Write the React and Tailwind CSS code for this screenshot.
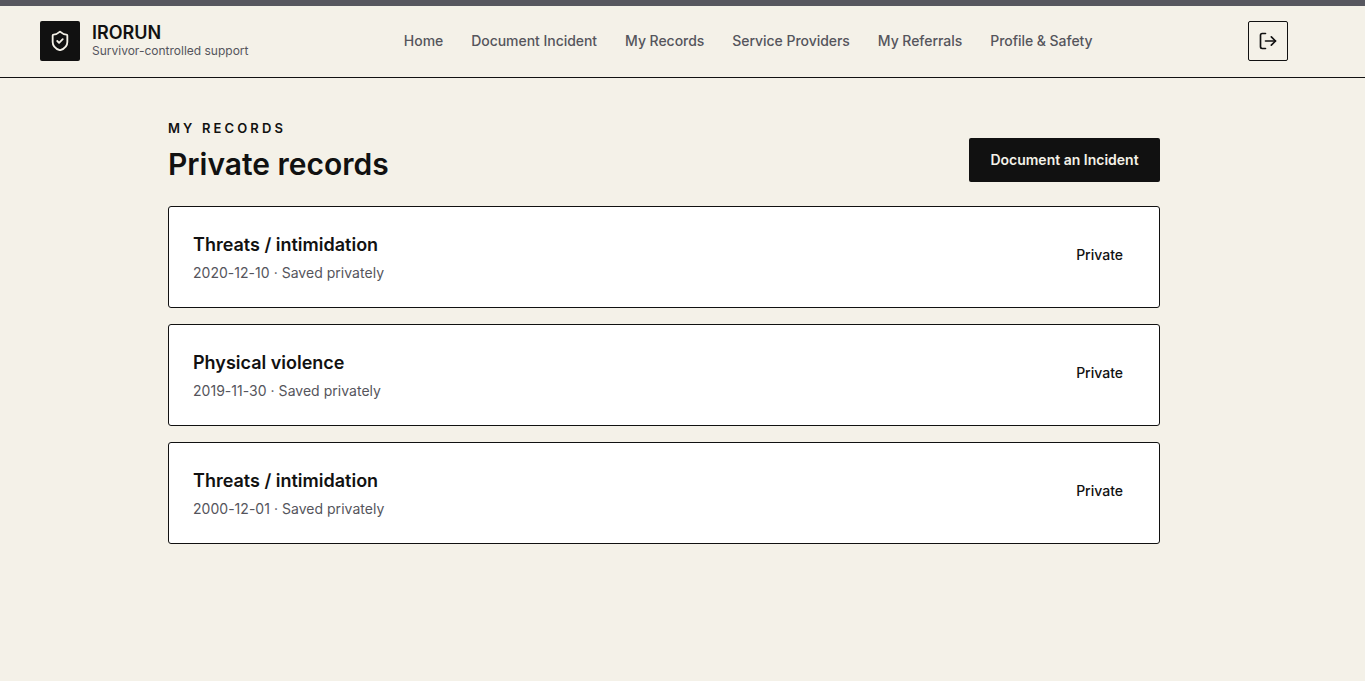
import { LogOut, ShieldCheck } from "lucide-react"

const links = ["Home", "Document Incident", "My Records", "Service Providers", "My Referrals", "Profile & Safety"]

const records = [
  { title: "Threats / intimidation", date: "2020-12-10" },
  { title: "Physical violence", date: "2019-11-30" },
  { title: "Threats / intimidation", date: "2000-12-01" },
]

function RecordCard({ title, date }) {
  return (
    <div className="h-[102px] bg-white border border-[#111111] rounded-[3px] pl-6 pr-9 flex items-center justify-between">
      <div>
        <h2 className="text-lg leading-7 font-semibold text-[#111111]">{title}</h2>
        <p className="text-sm leading-5 mt-1 tracking-[0.002em] text-[#55555c]">{date} · Saved privately</p>
      </div>
      <span className="text-sm leading-5 font-medium text-[#111111] mb-1">Private</span>
    </div>
  )
}

export default function App() {
  return (
    <div className="min-h-[681px] bg-[#f4f1e8] font-['Inter',sans-serif]">
      <div className="h-1.5 bg-[#57575f]" />

      {/* Header */}
      <header className="h-[72px] border-b border-[#111111] pb-px pl-10 pr-[77px] flex items-center justify-between">
        <div className="flex items-center gap-3">
          <div className="w-10 h-10 rounded-[2px] bg-[#111111] flex items-center justify-center">
            <ShieldCheck className="w-[22px] h-[22px] text-[#f4f1e8]" />
          </div>
          <div>
            <div className="text-lg leading-5 font-semibold text-[#111111]">IRORUN</div>
            <div className="text-xs leading-4 text-[#55555c]">Survivor-controlled support</div>
          </div>
        </div>
        <nav className="flex items-center gap-7">
          {links.map(link => (
            <a key={link} className="text-sm font-medium tracking-[-0.003em] text-[#55555c]">{link}</a>
          ))}
        </nav>
        <button className="w-10 h-10 border border-[#111111] rounded-[2px] flex items-center justify-center">
          <LogOut className="w-5 h-5 text-[#111111]" />
        </button>
      </header>

      {/* Content */}
      <main className="w-[992px] ml-[168px] pt-10">
        <div className="flex items-end justify-between mb-6">
          <div>
            <p className="text-[13px] leading-5 font-semibold tracking-[0.24em] text-[#111111]">MY RECORDS</p>
            <h1 className="text-3xl leading-9 mt-2 font-semibold text-[#111111]">Private records</h1>
          </div>
          <button className="h-11 w-[191px] rounded-[2px] bg-[#111111] text-sm font-semibold text-[#f4f1e8]">
            Document an Incident
          </button>
        </div>
        <div className="flex flex-col gap-4">
          {records.map((r, i) => <RecordCard key={i} {...r} />)}
        </div>
      </main>
    </div>
  )
}
